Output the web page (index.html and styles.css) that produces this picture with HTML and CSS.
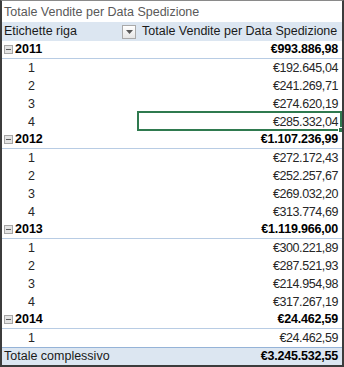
FILE: index.html
```html
<!DOCTYPE html>
<html lang="it">
<head>
<meta charset="utf-8">
<title>Totale Vendite per Data Spedizione</title>
<link rel="stylesheet" href="styles.css">
</head>
<body>
<div class="pivot">
  <div class="title">Totale Vendite per Data Spedizione</div>
  <div class="row head">
    <div class="lab headcell"><span>Etichette riga</span><span class="dd"><svg width="7" height="4" viewBox="0 0 7 4"><path d="M0 0H7L3.5 4Z" fill="#595959"/></svg></span></div>
    <div class="hval">Totale Vendite per Data Spedizione</div>
  </div>
  <div class="row year"><div class="lab"><span class="mn"><svg width="9" height="9" viewBox="0 0 9 9"><rect x="0.5" y="0.5" width="8" height="8" fill="#e4e4e4" stroke="#a6a6a6"/><rect x="2" y="4" width="5" height="1" fill="#595959"/></svg></span>2011</div><div class="val">€993.886,98</div></div>
  <div class="row"><div class="lab q">1</div><div class="val">€192.645,04</div></div>
  <div class="row"><div class="lab q">2</div><div class="val">€241.269,71</div></div>
  <div class="row"><div class="lab q">3</div><div class="val">€274.620,19</div></div>
  <div class="row"><div class="lab q">4</div><div class="val sel">€285.332,04</div></div>
  <div class="row year"><div class="lab"><span class="mn"><svg width="9" height="9" viewBox="0 0 9 9"><rect x="0.5" y="0.5" width="8" height="8" fill="#e4e4e4" stroke="#a6a6a6"/><rect x="2" y="4" width="5" height="1" fill="#595959"/></svg></span>2012</div><div class="val">€1.107.236,99</div></div>
  <div class="row"><div class="lab q">1</div><div class="val">€272.172,43</div></div>
  <div class="row"><div class="lab q">2</div><div class="val">€252.257,67</div></div>
  <div class="row"><div class="lab q">3</div><div class="val">€269.032,20</div></div>
  <div class="row"><div class="lab q">4</div><div class="val">€313.774,69</div></div>
  <div class="row year"><div class="lab"><span class="mn"><svg width="9" height="9" viewBox="0 0 9 9"><rect x="0.5" y="0.5" width="8" height="8" fill="#e4e4e4" stroke="#a6a6a6"/><rect x="2" y="4" width="5" height="1" fill="#595959"/></svg></span>2013</div><div class="val">€1.119.966,00</div></div>
  <div class="row"><div class="lab q">1</div><div class="val">€300.221,89</div></div>
  <div class="row"><div class="lab q">2</div><div class="val">€287.521,93</div></div>
  <div class="row"><div class="lab q">3</div><div class="val">€214.954,98</div></div>
  <div class="row"><div class="lab q">4</div><div class="val">€317.267,19</div></div>
  <div class="row year"><div class="lab"><span class="mn"><svg width="9" height="9" viewBox="0 0 9 9"><rect x="0.5" y="0.5" width="8" height="8" fill="#e4e4e4" stroke="#a6a6a6"/><rect x="2" y="4" width="5" height="1" fill="#595959"/></svg></span>2014</div><div class="val">€24.462,59</div></div>
  <div class="row"><div class="lab q">1</div><div class="val">€24.462,59</div></div>
  <div class="row total"><div class="lab">Totale complessivo</div><div class="val">€3.245.532,55</div></div>
</div>
</body>
</html>
```
FILE: styles.css
```css
html, body {
  margin: 0;
  padding: 0;
  background: #ffffff;
}
.pivot {
  width: 344px;
  height: 367px;
  box-sizing: border-box;
  border: 2px solid #3c3c3c;
  border-top: 1px solid #8a8a8a;
  font-family: "Liberation Sans", Arial, sans-serif;
  font-size: 12.5px;
  color: #262626;
  background: #fff;
  overflow: hidden;
}
.title {
  height: 21px;
  line-height: 23px;
  padding-left: 2px;
  color: #595959;
  white-space: nowrap;
}
.row {
  display: grid;
  grid-template-columns: 135px 1fr;
  height: 18px;
  line-height: 18px;
  box-sizing: border-box;
  white-space: nowrap;
}
.head {
  height: 19px;
  line-height: 19px;
  background: #dce6f1;
  color: #1a1a1a;
}
.headcell {
  display: flex;
  align-items: center;
  justify-content: space-between;
  padding-right: 1px;
}
.dd {
  width: 14px;
  height: 14px;
  box-sizing: border-box;
  border: 1px solid #a9a9a9;
  background: linear-gradient(#ffffff, #e6e6e6);
  display: flex;
  align-items: center;
  justify-content: center;
}
.dd svg { display: block; }
.hval {
  padding-left: 5px;
}
.lab {
  padding-left: 2px;
}
.q {
  padding-left: 26px;
}
.val {
  text-align: right;
  padding-right: 4px;
  letter-spacing: -0.4px;
}
.year {
  font-weight: bold;
  color: #000;
  border-bottom: 1px solid #b8cce4;
  line-height: 17px;
}
.year .val,
.total .val {
  letter-spacing: -0.2px;
}
.mn {
  display: inline-block;
  vertical-align: -1px;
  margin-right: 2px;
}
.mn svg { display: block; }
.sel {
  position: relative;
}
.sel::before {
  content: "";
  position: absolute;
  left: 0;
  right: 0;
  top: -2px;
  bottom: 0;
  border: 2px solid #2f7a4f;
}
.sel::after {
  content: "";
  position: absolute;
  right: -2px;
  bottom: -2px;
  width: 4px;
  height: 4px;
  background: #2f7a4f;
  border: 1px solid #fff;
}
.total {
  background: #dce6f1;
  border-top: 1px solid #95b3d7;
  line-height: 17px;
  color: #1a1a1a;
}
.total .val {
  font-weight: bold;
  color: #000;
}
```
